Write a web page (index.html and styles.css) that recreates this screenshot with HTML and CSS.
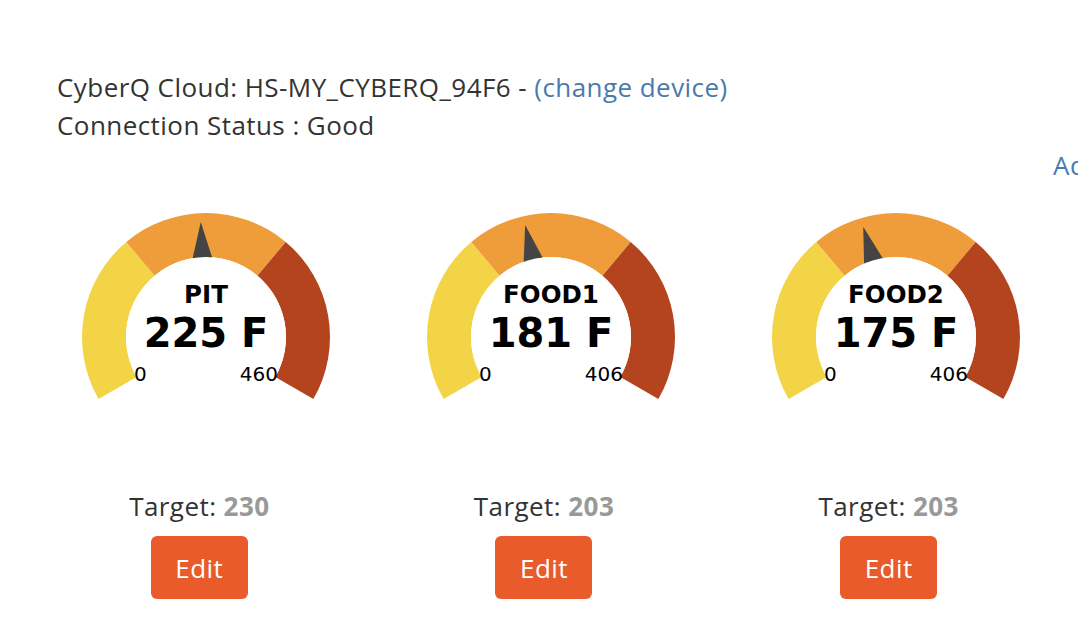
FILE: index.html
```html
<!DOCTYPE html>
<html>
<head>
<meta charset="utf-8">
<link rel="stylesheet" href="styles.css">
</head>
<body>
<div class="page">
  <div class="device">
    <p class="line">CyberQ Cloud: HS-MY_CYBERQ_94F6 - <a class="link" href="#">(change device)</a></p>
    <p class="line">Connection Status : Good</p>
  </div>
  <div class="actions"><a class="link" href="#">Add Device</a></div>
  <div class="gauges">
    <div class="probe">
      <svg class="gauge" viewBox="0 0 260 200" width="260" height="200">
        <path class="seg-low" d="M22.61 196 A124 124 0 0 1 50.30 39.01 L78.58 72.72 A80 80 0 0 0 60.72 174 Z"/>
        <path class="seg-mid" d="M50.30 39.01 A124 124 0 0 1 209.70 39.01 L181.42 72.72 A80 80 0 0 0 78.58 72.72 Z"/>
        <path class="seg-high" d="M209.70 39.01 A124 124 0 0 1 237.39 196 L199.28 174 A80 80 0 0 0 181.42 72.72 Z"/>
        <polygon class="needle" points="130,19 118.3,62 141.7,62" transform="rotate(-2.61 130 134)"/>
        <circle class="hub" cx="130" cy="134" r="80"/>
        <text class="g-title" x="130" y="100">PIT</text>
        <text class="g-value" x="130" y="144">225 F</text>
        <text class="g-min" x="58" y="178">0</text>
        <text class="g-max" x="202" y="178">460</text>
      </svg>
      <p class="target">Target: <b class="target-num">230</b></p>
      <button class="edit">Edit</button>
    </div>
    <div class="probe">
      <svg class="gauge" viewBox="0 0 260 200" width="260" height="200">
        <path class="seg-low" d="M22.61 196 A124 124 0 0 1 50.30 39.01 L78.58 72.72 A80 80 0 0 0 60.72 174 Z"/>
        <path class="seg-mid" d="M50.30 39.01 A124 124 0 0 1 209.70 39.01 L181.42 72.72 A80 80 0 0 0 78.58 72.72 Z"/>
        <path class="seg-high" d="M209.70 39.01 A124 124 0 0 1 237.39 196 L199.28 174 A80 80 0 0 0 181.42 72.72 Z"/>
        <polygon class="needle" points="130,19 118.3,62 141.7,62" transform="rotate(-13.0 130 134)"/>
        <circle class="hub" cx="130" cy="134" r="80"/>
        <text class="g-title" x="130" y="100">FOOD1</text>
        <text class="g-value" x="130" y="144">181 F</text>
        <text class="g-min" x="58" y="178">0</text>
        <text class="g-max" x="202" y="178">406</text>
      </svg>
      <p class="target">Target: <b class="target-num">203</b></p>
      <button class="edit">Edit</button>
    </div>
    <div class="probe">
      <svg class="gauge" viewBox="0 0 260 200" width="260" height="200">
        <path class="seg-low" d="M22.61 196 A124 124 0 0 1 50.30 39.01 L78.58 72.72 A80 80 0 0 0 60.72 174 Z"/>
        <path class="seg-mid" d="M50.30 39.01 A124 124 0 0 1 209.70 39.01 L181.42 72.72 A80 80 0 0 0 78.58 72.72 Z"/>
        <path class="seg-high" d="M209.70 39.01 A124 124 0 0 1 237.39 196 L199.28 174 A80 80 0 0 0 181.42 72.72 Z"/>
        <polygon class="needle" points="130,19 118.3,62 141.7,62" transform="rotate(-16.55 130 134)"/>
        <circle class="hub" cx="130" cy="134" r="80"/>
        <text class="g-title" x="130" y="100">FOOD2</text>
        <text class="g-value" x="130" y="144">175 F</text>
        <text class="g-min" x="58" y="178">0</text>
        <text class="g-max" x="202" y="178">406</text>
      </svg>
      <p class="target">Target: <b class="target-num">203</b></p>
      <button class="edit">Edit</button>
    </div>
  </div>
</div>
</body>
</html>
```
FILE: styles.css
```css
html, body {
  margin: 0;
  padding: 0;
  background: #fff;
  overflow: hidden;
}
body {
  font-family: "Open Sans", "Noto Sans", sans-serif;
  color: #333;
  font-size: 26px;
  letter-spacing: 0.44px;
}
.page {
  padding-top: 68px;
}
.device {
  padding-left: 57px;
}
.line {
  margin: 0;
  line-height: 38px;
  white-space: nowrap;
}
.link {
  color: #4a7aad;
  text-decoration: none;
}
.actions {
  margin-top: 2px;
  padding-left: 1053px;
  line-height: 38px;
  white-space: nowrap;
}
.gauges {
  margin-top: 19px;
  padding-left: 27px;
  width: 1034px;
  display: grid;
  grid-template-columns: repeat(3, 1fr);
}
.probe {
  display: flex;
  flex-direction: column;
  align-items: center;
}
.gauge {
  display: block;
  margin-left: 14px;
}
.seg-low { fill: #f4d447; }
.seg-mid { fill: #ef9c3a; }
.seg-high { fill: #b4441e; }
.needle { fill: #444; }
.hub { fill: #fff; }
.g-title, .g-value, .g-min, .g-max {
  font-family: "DejaVu Sans", sans-serif;
  fill: #000;
  letter-spacing: 0;
}
.g-title {
  font-weight: bold;
  font-size: 24.5px;
  text-anchor: middle;
}
.g-value {
  font-weight: bold;
  font-size: 40px;
  text-anchor: middle;
}
.g-min {
  font-size: 20px;
  text-anchor: start;
}
.g-max {
  font-size: 20px;
  text-anchor: end;
}
.target {
  margin: 84px 0 0;
  line-height: 38px;
  white-space: nowrap;
}
.target-num {
  color: #999;
  font-weight: bold;
}
.edit {
  margin-top: 11px;
  width: 97px;
  height: 63px;
  border: none;
  border-radius: 6px;
  background: #e95b2b;
  color: #fff;
  font-family: "Open Sans", "Noto Sans", sans-serif;
  font-size: 26px;
  letter-spacing: 0.44px;
  padding: 0;
  cursor: pointer;
}
```
